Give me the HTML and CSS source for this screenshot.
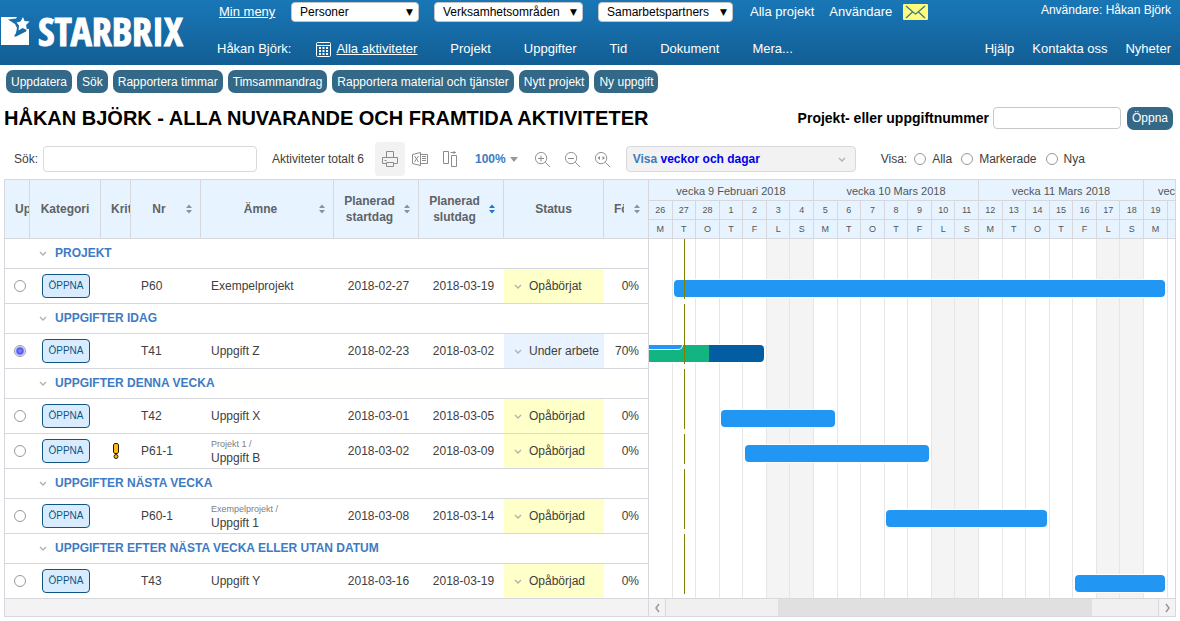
FILE: index.html
```html
<!DOCTYPE html>
<html lang="sv">
<head>
<meta charset="utf-8">
<title>Starbrix - Alla aktiviteter</title>
<link rel="stylesheet" href="styles.css">
</head>
<body>
<svg class="defs" aria-hidden="true">
  <symbol id="chev" viewBox="0 0 8 5"><path d="M1 1l3 3 3-3" fill="none" stroke="currentColor" stroke-width="1.3"/></symbol>
  <symbol id="sort" viewBox="0 0 6 10"><path class="up" d="M0 4l3-3.5L6 4z"/><path class="down" d="M0 6h6L3 9.5z"/></symbol>
  <symbol id="lens" viewBox="0 0 18 18"><g fill="none" stroke="currentColor"><circle cx="7.500" cy="7.500" r="6"/><path d="M12 12l5 5"/></g></symbol>
</svg>

<header class="top">
  <a class="logo" href="#" aria-label="Starbrix">
    <svg viewBox="0 0 30 30" width="30" height="30"><path fill="#fff" d="M1 1h16l-1 1.500-8 1 7 4.500 2 4-1 5-2 3.500h2l2-1 8-4 1-2.500h2v16H1z"/><path fill="#fff" d="M23 1l1.500 4 5 .5-3.500 3.500 1 5-4.500-2-4 2.500.5-5-2.500-3 4-1z"/></svg>
    <span>STARBRIX</span>
  </a>
  <nav class="menus">
    <div class="menu-row first">
      <a class="active mine" href="#">Min meny</a>
      <label class="pick persons"><select aria-label="Personer"><option>Personer</option></select></label>
      <label class="pick areas"><select aria-label="Verksamhetsområden"><option>Verksamhetsområden</option></select></label>
      <label class="pick partners"><select aria-label="Samarbetspartners"><option>Samarbetspartners</option></select></label>
      <a class="all" href="#">Alla projekt</a>
      <a href="#">Användare</a>
      <a class="mail" href="#" aria-label="Meddelanden"><svg viewBox="0 0 25 16" width="25" height="16"><rect width="25" height="16" rx="1" fill="#fffb7d"/><path d="M3 2l7.500 6.500 2 1.500 2-1.500L22 2M3 14l6.500-6M22 14l-6.500-6" fill="none" stroke="#3b7c8c" stroke-width="1.300"/></svg></a>
    </div>
    <div class="menu-row second">
      <span class="owner">Håkan Björk:</span>
      <a class="calendar active" href="#"><svg viewBox="0 0 15 15" width="15" height="15"><path d="M1.500.5h12a1 1 0 0 1 1 1v12a1 1 0 0 1-1 1h-12a1 1 0 0 1-1-1v-12a1 1 0 0 1 1-1zM1 3.500h13" fill="none" stroke="#fff"/><path d="M3 5h2v2H3zM6.500 5h2v2h-2zM10 5h2v2h-2zM3 8h2v2H3zM6.500 8h2v2h-2zM10 8h2v2h-2zM3 11h2v2H3zM6.500 11h2v2h-2zM10 11h2v2h-2z" fill="#fff"/></svg>Alla aktiviteter</a>
      <a href="#">Projekt</a>
      <a href="#">Uppgifter</a>
      <a href="#">Tid</a>
      <a href="#">Dokument</a>
      <a href="#">Mera...</a>
    </div>
  </nav>
  <div class="account">
    <span class="user">Användare: Håkan Björk</span>
    <div class="help"><a href="#">Hjälp</a><a href="#">Kontakta oss</a><a href="#">Nyheter</a></div>
  </div>
</header>

<div class="actions">
  <button class="btn">Uppdatera</button><button class="btn">Sök</button><button class="btn">Rapportera timmar</button><button class="btn">Timsammandrag</button><button class="btn">Rapportera material och tjänster</button><button class="btn">Nytt projekt</button><button class="btn">Ny uppgift</button>
</div>

<main>
  <div class="heading">
    <h1>HÅKAN BJÖRK - ALLA NUVARANDE OCH FRAMTIDA AKTIVITETER</h1>
    <form class="jump"><label for="number">Projekt- eller uppgiftnummer</label><input id="number" type="text"><button type="button" class="btn">Öppna</button></form>
  </div>

  <div class="toolbar">
    <label class="search" for="search">Sök:</label><input id="search" type="text">
    <span class="total">Aktiviteter totalt 6</span>
    <div class="icons">
      <button class="icon on" aria-label="Skriv ut"><svg viewBox="0 0 16 16" width="16" height="16"><g fill="none" stroke="#8c8c8c"><path d="M4.500 6.500v-6h7v6M4.500 12.500h-4v-6h15v6h-4M4.500 11.500h7v4h-7zM2.500 9.500h2"/></g></svg></button>
      <button class="icon" aria-label="Excel"><svg viewBox="0 0 16 16" width="16" height="16"><g fill="none" stroke="#8c8c8c"><path d="M.5 3.500l8-2v13l-8-2zM8.500 3.500h7v9h-7M10 5.500h4M10 7.500h4M10 9.500h4M2.500 5l4 6M6.500 5l-4 6"/></g></svg></button>
      <button class="icon" aria-label="Kolumner"><svg viewBox="0 0 14 16" width="14" height="16"><path d="M.5.5h5v12h-5zM8.500 4.500h5v11h-5zM7.500 1.500h5M10.500.5l2 1-2 1" fill="none" stroke="#8c8c8c"/></svg></button>
    </div>
    <button class="scale">100%<i></i></button>
    <div class="icons">
      <button class="icon" aria-label="Zooma in"><svg width="17" height="17"><use href="#lens"/><path d="M4 7.500h6M7 4.500v6" stroke="#8c8c8c"/></svg></button>
      <button class="icon" aria-label="Zooma ut"><svg width="17" height="17"><use href="#lens"/><path d="M4 7.500h6" stroke="#8c8c8c"/></svg></button>
      <button class="icon" aria-label="Anpassa"><svg width="17" height="17"><use href="#lens"/><path d="M6 5v4L3.500 7zM8.500 5v4L11 7z" fill="#8c8c8c"/></svg></button>
    </div>
    <button class="view"><span>Visa <b>veckor och dagar</b></span><svg class="chev" width="8" height="5"><use href="#chev"/></svg></button>
    <div class="filter"><span>Visa:</span>
      <label><input type="radio" name="show">Alla</label>
      <label><input type="radio" name="show">Markerade</label>
      <label><input type="radio" name="show">Nya</label>
    </div>
  </div>

  <div class="gantt">
    <table class="tasks">
      <colgroup><col class="c-up"><col class="c-cat"><col class="c-crit"><col class="c-nr"><col class="c-name"><col class="c-date"><col class="c-date"><col class="c-status"><col class="c-done"></colgroup>
      <thead><tr>
        <th class="cut">Up</th><th>Kategori</th><th class="cut">Krit</th>
        <th><div class="sortable"><span>Nr</span><svg class="sort" width="6" height="10"><use href="#sort"/></svg></div></th>
        <th><div class="sortable"><span>Ämne</span><svg class="sort" width="6" height="10"><use href="#sort"/></svg></div></th>
        <th><div class="sortable"><span>Planerad startdag</span><svg class="sort" width="6" height="10"><use href="#sort"/></svg></div></th>
        <th><div class="sortable"><span>Planerad slutdag</span><svg class="sort asc" width="6" height="10"><use href="#sort"/></svg></div></th>
        <th>Status</th>
        <th><div class="sortable"><span class="clip">Fö</span><svg class="sort" width="6" height="10"><use href="#sort"/></svg></div></th>
      </tr></thead>
      <tbody>
        <tr class="group"><td colspan="9"><svg class="chev" width="8" height="5"><use href="#chev"/></svg>PROJEKT</td></tr>
        <tr class="task"><td><input type="radio" name="row" aria-label="P60"></td><td><button class="open">ÖPPNA</button></td><td></td><td class="l">P60</td><td class="l">Exempelprojekt</td><td class="d">2018-02-27</td><td class="d">2018-03-19</td><td class="l wait"><svg class="chev" width="8" height="5"><use href="#chev"/></svg>Opåbörjat</td><td class="r">0%</td></tr>
        <tr class="group"><td colspan="9"><svg class="chev" width="8" height="5"><use href="#chev"/></svg>UPPGIFTER IDAG</td></tr>
        <tr class="task"><td><input type="radio" name="row" aria-label="T41" checked></td><td><button class="open">ÖPPNA</button></td><td></td><td class="l">T41</td><td class="l">Uppgift Z</td><td class="d">2018-02-23</td><td class="d">2018-03-02</td><td class="l work"><svg class="chev" width="8" height="5"><use href="#chev"/></svg>Under arbete</td><td class="r">70%</td></tr>
        <tr class="group"><td colspan="9"><svg class="chev" width="8" height="5"><use href="#chev"/></svg>UPPGIFTER DENNA VECKA</td></tr>
        <tr class="task"><td><input type="radio" name="row" aria-label="T42"></td><td><button class="open">ÖPPNA</button></td><td></td><td class="l">T42</td><td class="l">Uppgift X</td><td class="d">2018-03-01</td><td class="d">2018-03-05</td><td class="l wait"><svg class="chev" width="8" height="5"><use href="#chev"/></svg>Opåbörjad</td><td class="r">0%</td></tr>
        <tr class="task"><td><input type="radio" name="row" aria-label="P61-1"></td><td><button class="open">ÖPPNA</button></td><td><svg class="crit" viewBox="0 0 6 16" width="6" height="16" aria-label="Kritisk"><path d="M1.500.5h3l1 1.500v7l-1 1.500h-3L.5 9V2z" fill="#fdb813" stroke="#221a00"/><circle cx="3" cy="13.500" r="2" fill="#fdb813" stroke="#221a00"/></svg></td><td class="l">P61-1</td><td class="l"><small>Projekt 1 /</small>Uppgift B</td><td class="d">2018-03-02</td><td class="d">2018-03-09</td><td class="l wait"><svg class="chev" width="8" height="5"><use href="#chev"/></svg>Opåbörjad</td><td class="r">0%</td></tr>
        <tr class="group"><td colspan="9"><svg class="chev" width="8" height="5"><use href="#chev"/></svg>UPPGIFTER NÄSTA VECKA</td></tr>
        <tr class="task"><td><input type="radio" name="row" aria-label="P60-1"></td><td><button class="open">ÖPPNA</button></td><td></td><td class="l">P60-1</td><td class="l"><small>Exempelprojekt /</small>Uppgift 1</td><td class="d">2018-03-08</td><td class="d">2018-03-14</td><td class="l wait"><svg class="chev" width="8" height="5"><use href="#chev"/></svg>Opåbörjad</td><td class="r">0%</td></tr>
        <tr class="group"><td colspan="9"><svg class="chev" width="8" height="5"><use href="#chev"/></svg>UPPGIFTER EFTER NÄSTA VECKA ELLER UTAN DATUM</td></tr>
        <tr class="task"><td><input type="radio" name="row" aria-label="T43"></td><td><button class="open">ÖPPNA</button></td><td></td><td class="l">T43</td><td class="l">Uppgift Y</td><td class="d">2018-03-16</td><td class="d">2018-03-19</td><td class="l wait"><svg class="chev" width="8" height="5"><use href="#chev"/></svg>Opåbörjad</td><td class="r">0%</td></tr>
      </tbody>
    </table>

    <div class="chart">
      <div class="weeks">
        <section class="week"><h2>vecka 9 Februari 2018</h2>
          <div class="days"><span>26</span><span>27</span><span>28</span><span>1</span><span>2</span><span>3</span><span>4</span></div>
          <div class="days"><span>M</span><span>T</span><span>O</span><span>T</span><span>F</span><span>L</span><span>S</span></div>
          <div class="days lanes"><i></i><i></i><i></i><i></i><i></i><i></i><i></i></div></section>
        <section class="week"><h2>vecka 10 Mars 2018</h2>
          <div class="days"><span>5</span><span>6</span><span>7</span><span>8</span><span>9</span><span>10</span><span>11</span></div>
          <div class="days"><span>M</span><span>T</span><span>O</span><span>T</span><span>F</span><span>L</span><span>S</span></div>
          <div class="days lanes"><i></i><i></i><i></i><i></i><i></i><i></i><i></i></div></section>
        <section class="week"><h2>vecka 11 Mars 2018</h2>
          <div class="days"><span>12</span><span>13</span><span>14</span><span>15</span><span>16</span><span>17</span><span>18</span></div>
          <div class="days"><span>M</span><span>T</span><span>O</span><span>T</span><span>F</span><span>L</span><span>S</span></div>
          <div class="days lanes"><i></i><i></i><i></i><i></i><i></i><i></i><i></i></div></section>
        <section class="week last"><h2>vecka</h2>
          <div class="days"><span>19</span><span></span></div>
          <div class="days"><span>M</span><span></span></div>
          <div class="days lanes"><i></i><i></i></div></section>
      </div>
      <div class="rows">
        <div class="row"></div>
        <div class="row tall"><div class="bar" style="left:25px;width:491px"></div></div>
        <div class="row"></div>
        <div class="row tall"><div class="bar part" style="left:-80px;width:195px"><span class="done" style="width:140px"></span><span class="plan" style="width:113px"></span></div></div>
        <div class="row"></div>
        <div class="row tall"><div class="bar" style="left:72px;width:114px"></div></div>
        <div class="row tall"><div class="bar" style="left:96px;width:184px"></div></div>
        <div class="row"></div>
        <div class="row tall"><div class="bar" style="left:237px;width:161px"></div></div>
        <div class="row"></div>
        <div class="row tall"><div class="bar" style="left:426px;width:90px"></div></div>
      </div>
    </div>
    <div class="foot"></div>
    <div class="scroll">
      <button aria-label="Vänster"><svg width="5" height="10"><path d="M4 1L1 5l3 4" fill="none" stroke="#999" stroke-width="1.500"/></svg></button>
      <div class="track"><div class="thumb" style="margin-left:22.800%;width:63.800%"></div></div>
      <button aria-label="Höger"><svg width="5" height="10"><path d="M1 1l3 4-3 4" fill="none" stroke="#999" stroke-width="1.500"/></svg></button>
    </div>
  </div>
</main>
</body>
</html>
```
FILE: styles.css
```css
* { box-sizing: border-box; }
body { margin: 0; background: #fff; color: #404040; font: 12px/16px "Liberation Sans", Arial, sans-serif; overflow-x: hidden; }
button, input, select { font: inherit; color: inherit; margin: 0; }
button { padding: 0; border: 0; background: none; cursor: pointer; }
svg { display: block; flex: none; }
.defs { position: absolute; width: 0; height: 0; }
.chev { color: #b0b0b0; }

.top { display: flex; height: 65px; padding: 0 9px 0 0; background: linear-gradient(#1977b7, #125e94); color: #fff; font-size: 13px; }
.top a { color: #fff; text-decoration: none; }
.top .active { text-decoration: underline; }
.logo { display: flex; align-items: flex-start; gap: 8px; width: 217px; padding-top: 16px; }
.logo span { font: bold 40px/30px "Open Sans Condensed", "Roboto Condensed", "Liberation Sans Narrow", "Liberation Sans", sans-serif; -webkit-text-stroke: 1px #fff; }
.menus { flex: 1; }
.menu-row { display: flex; align-items: center; }
.first { height: 24px; gap: 15px; }
.first .mine { width: 59px; padding-left: 2px; }
.first .all { margin-left: 2px; }
.second { height: 50px; gap: 33px; }
.owner { margin-right: -8px; }
.calendar { display: flex; align-items: center; gap: 5px; }
.mail { margin-left: -4px; }
.pick { position: relative; height: 20px; }
.pick::after { content: "▼"; position: absolute; right: 6px; top: 2px; color: #000; font: 9px/16px "DejaVu Sans", sans-serif; pointer-events: none; }
.pick select { appearance: none; width: 100%; height: 20px; padding: 0 8px; border: 1px solid #c4c4c4; border-radius: 4px; background: #fff; color: #000; font-size: 12px; }
.persons { width: 128px; }
.areas { width: 149px; }
.partners { width: 135px; }
.account { display: flex; flex-direction: column; align-items: flex-end; gap: 23px; padding-top: 2px; }
.user { font-size: 12px; }
.help { display: flex; gap: 18px; }

.actions { display: flex; gap: 5px; padding: 5px 6px 0; }
.btn { height: 23px; padding: 0 5px; border-radius: 7px; background: #336886; color: #fff; }

main { padding: 0 4px; }
.heading { display: flex; align-items: center; justify-content: space-between; padding: 12px 3px 0 0; color: #000; }
h1 { margin: 0; font-size: 20px; line-height: 26px; }
.jump { display: flex; align-items: center; font-size: 14px; font-weight: bold; }
.jump input { width: 128px; height: 22px; margin: 0 6px 0 4px; border: 1px solid #c8c8cc; border-radius: 4px; }
.jump .btn { font-size: 12px; font-weight: normal; }

.toolbar { display: flex; align-items: center; height: 34px; margin: 11px 0 3px; padding-left: 10px; }
#search { width: 214px; height: 26px; margin: 0 15px 0 5px; border: 1px solid #d8d8de; border-radius: 4px; }
.search { width: 24px; }
.total { width: 103px; }
.icons { display: flex; }
.icon { display: grid; place-items: center; width: 30px; height: 34px; border-radius: 4px; color: #8c8c8c; }
.icon.on { background: #f2f2f2; }
.scale { display: flex; align-items: center; gap: 4px; margin: 0 10px; color: #3d7bbf; font-weight: bold; }
.scale i { border: 4px solid transparent; border-top: 5px solid #999; border-bottom: 0; }
.view { display: flex; align-items: center; justify-content: space-between; width: 230px; height: 26px; margin: 0 25px 0 8px; padding: 0 9px 0 6px; border: 1px solid #d8d8de; border-radius: 4px; background: #f2f2f2; color: #3d7bbf; font-weight: bold; }
.view b { color: #0000e6; }
.filter, .filter label { display: flex; align-items: center; }
.filter label { gap: 6px; margin-right: 9px; }
.filter span { margin-right: 7px; }
input[type=radio] { appearance: none; flex: none; display: block; width: 12px; height: 12px; border: 1px solid #999; border-radius: 50%; background: #fff; }
input[type=radio]:checked { background: radial-gradient(circle at center, #7a84ff 1px, #4a52f2 3px, #fff 5px); }

.gantt { display: grid; grid-template-columns: 645px minmax(0, 1fr); border: 1px solid #d7d7de; border-left: 0; }
.tasks { width: 645px; table-layout: fixed; border-collapse: separate; border-spacing: 0; border-left: 1px solid #d7d7de; }
.c-up { width: 25px; } .c-cat { width: 71px; } .c-crit { width: 30px; } .c-nr { width: 70px; } .c-name { width: 133px; }
.c-date { width: 85px; } .c-status { width: 100px; } .c-done { width: 45px; }
.tasks th { height: 59px; padding: 0 10px; overflow: hidden; border-right: 1px solid #d7d7de; border-bottom: 1px solid #d7d7de; background: #e7f4ff; color: #606266; }
.tasks th.cut { padding-right: 0; text-align: left; white-space: nowrap; }
.sortable { display: flex; align-items: center; justify-content: space-between; gap: 9px; margin-right: -2px; }
.sortable span { flex: 1; }
.sortable .clip { flex: none; width: 10px; overflow: hidden; text-align: left; }
.sort { fill: #8e9196; }
.sort.asc .up, .sort.asc { fill: #1976d2; }
.tasks td { padding: 0; border-bottom: 1px solid #d7d7de; text-align: center; }
.tasks td:last-child { border-right: 1px solid #d7d7de; }
.group td { height: 30px; padding: 0 0 2px 50px; color: #3d7bc4; font-weight: bold; text-align: left; }
.group .chev { float: left; margin: 6px 0 0 -16px; }
.task td { height: 35px; line-height: 14px; }
.task td.l { padding-left: 10px; text-align: left; }
.task td.d { padding-left: 4px; }
.task td.r { padding-right: 9px; text-align: right; }
.task input { margin-left: 9px; }
.task .chev { float: left; margin: 5px 7px 0 0; }
.task .wait { background: #ffffca; }
.task .work { background: #e9f2ff; }
.task small { display: block; color: #808080; font-size: 9px; line-height: 14px; }
.open { display: block; width: 48px; height: 24px; margin-left: 12px; border: 1px solid #0f5582; border-radius: 4px; background: #d9ecff; color: #0f5582; font-size: 10px; }
.crit { margin: 0 auto; }

.chart { position: relative; overflow: hidden; }
.weeks { display: flex; height: 100%; }
.week { display: flex; flex: none; flex-direction: column; width: 165px; color: #555; text-align: center; }
.week h2 { height: 21px; margin: 0; border: solid #d7d7de; border-width: 0 1px 1px 0; background: #e7f4ff; font-size: 11px; font-weight: normal; line-height: 22px; }
.week.last { flex: 1; min-width: 0; }
.last h2 { padding-left: 14px; overflow: hidden; border-right: 0; text-align: left; }
.days { display: grid; grid-template-columns: repeat(7, 1fr); height: 19px; }
.last .days { grid-template-columns: 24px 1fr; }
.last .days :last-child { border-right: 0; }
.days span { border: solid #d7d7de; border-width: 0 1px 1px 0; background: #e7f4ff; font-size: 9px; line-height: 18px; }
.week .lanes { flex: 1; }
.lanes i { border-right: 1px solid #e6e6e6; }
.lanes i:nth-child(n+6) { background: #f4f4f4; }
.rows { position: absolute; inset: 59px 0 0; }
.row { position: relative; height: 30px; }
.row.tall { height: 35px; }
.row::after { content: ""; position: absolute; left: 35px; top: 0; width: 1px; height: 30px; background: #808000; }
.bar { position: absolute; top: 11px; height: 17px; border-radius: 4px; background: #2196f3; box-shadow: 0 0 0 1px #fff; }
.bar.part { background: #035da3; }
.done, .plan { position: absolute; left: 0; top: 0; }
.done { height: 17px; background: #12b481; }
.plan { height: 4px; border-radius: 0 0 4px 0; background: #2196f3; box-shadow: 0 0 0 1px #fff; }

.foot, .scroll { position: relative; height: 18px; margin-top: -1px; border-top: 1px solid #d7d7de; background: #f3f3f3; }
.foot { border-left: 1px solid #d7d7de; border-right: 1px solid #d7d7de; }
.scroll { display: flex; }
.scroll button { display: grid; place-items: center; width: 17px; border-right: 1px solid #d7d7de; }
.scroll button:last-child { border-right: 0; border-left: 1px solid #d7d7de; }
.track { flex: 1; background: #f0f0f0; }
.thumb { height: 17px; background: #e0e0e0; }
```
